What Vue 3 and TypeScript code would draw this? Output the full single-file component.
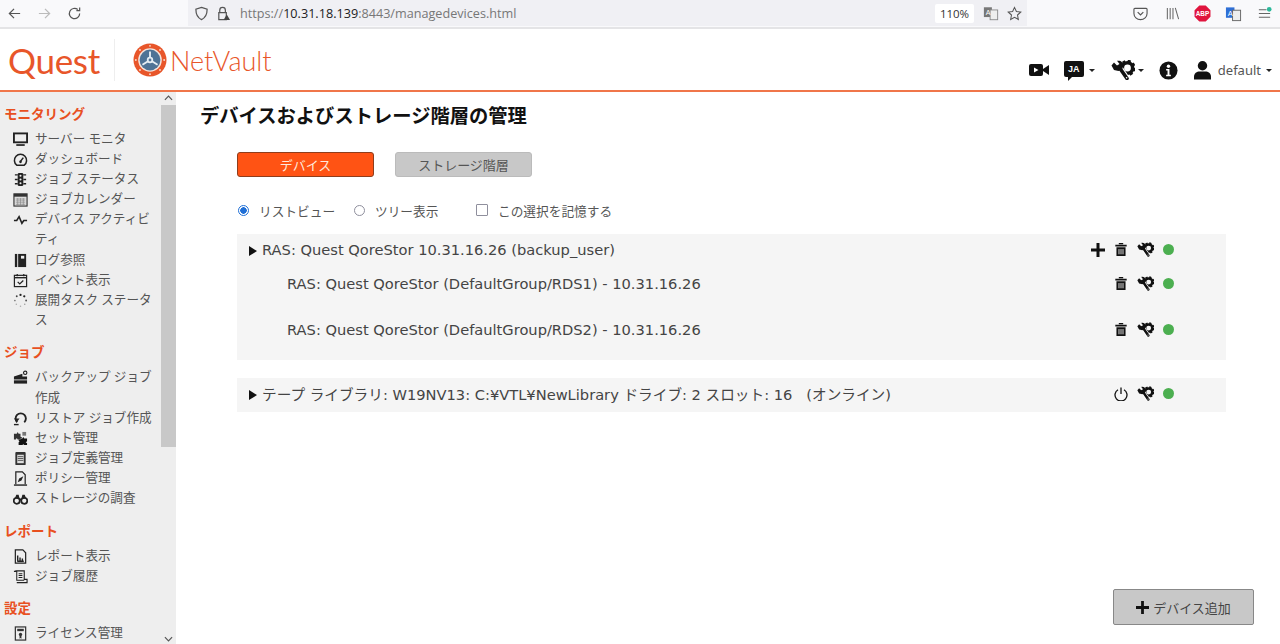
<script setup lang="ts">
interface NavItem { icon: string; label: string }
interface NavGroup { title: string; items: NavItem[] }

const groups: NavGroup[] = [
  { title: 'モニタリング', items: [
    { icon: 'monitor', label: 'サーバー モニタ' },
    { icon: 'gauge', label: 'ダッシュボード' },
    { icon: 'traffic', label: 'ジョブ ステータス' },
    { icon: 'calendar', label: 'ジョブカレンダー' },
    { icon: 'pulse', label: 'デバイス アクティビ\nティ' },
    { icon: 'book', label: 'ログ参照' },
    { icon: 'event', label: 'イベント表示' },
    { icon: 'spinner', label: '展開タスク ステータ\nス' },
  ] },
  { title: 'ジョブ', items: [
    { icon: 'backup', label: 'バックアップ ジョブ\n作成' },
    { icon: 'restore', label: 'リストア ジョブ作成' },
    { icon: 'sets', label: 'セット管理' },
    { icon: 'jobdef', label: 'ジョブ定義管理' },
    { icon: 'policy', label: 'ポリシー管理' },
    { icon: 'binoculars', label: 'ストレージの調査' },
  ] },
  { title: 'レポート', items: [
    { icon: 'report', label: 'レポート表示' },
    { icon: 'scroll', label: 'ジョブ履歴' },
  ] },
  { title: '設定', items: [
    { icon: 'license', label: 'ライセンス管理' },
  ] },
]
</script>

<template>
  <div class="page">
    <svg class="defs" width="0" height="0" aria-hidden="true">
      <defs>
        <symbol id="i-monitor" viewBox="0 0 16 16"><rect x="1" y="1.5" width="14" height="9.5" fill="none" stroke="#222" stroke-width="2"/><rect x="3.5" y="13" width="9" height="1.8" fill="#222"/></symbol>
        <symbol id="i-gauge" viewBox="0 0 16 16"><path d="M4 14A6.5 6.5 0 1 1 12 14Z" fill="none" stroke="#222" stroke-width="1.6"/><path d="M8 10l3-4" stroke="#222" stroke-width="1.6"/><circle cx="8" cy="10.5" r="1.4" fill="#222"/></symbol>
        <symbol id="i-traffic" viewBox="0 0 16 16"><rect x="5" y="1" width="6" height="14" rx="1.5" fill="#222"/><path d="M2 3h3M11 3h3M2 8h3M11 8h3M2 12.5h3M11 12.5h3" stroke="#222" stroke-width="1.4"/><circle cx="8" cy="4" r="1.1" fill="#eee"/><circle cx="8" cy="8" r="1.1" fill="#eee"/><circle cx="8" cy="12" r="1.1" fill="#eee"/></symbol>
        <symbol id="i-calendar" viewBox="0 0 16 16"><rect x="1" y="2" width="14" height="13" fill="#ddd" stroke="#333" stroke-width="1.2"/><rect x="1" y="2" width="14" height="3" fill="#333"/><path d="M3 7.5h10M3 9.5h10M3 11.5h10M3 13.5h10M5 6.5v8M8 6.5v8M11 6.5v8" stroke="#888" stroke-width=".7"/></symbol>
        <symbol id="i-pulse" viewBox="0 0 16 16"><path d="M1 9h3l2.5-4 3 7 2-3H15" fill="none" stroke="#222" stroke-width="1.7"/></symbol>
        <symbol id="i-book" viewBox="0 0 16 16"><rect x="2" y="1" width="2.5" height="14" fill="#222"/><rect x="5.5" y="1" width="8.5" height="14" fill="#222"/><rect x="8.5" y="3" width="3.5" height="3" fill="#eee"/></symbol>
        <symbol id="i-event" viewBox="0 0 16 16"><rect x="1.5" y="2.5" width="13" height="12" fill="none" stroke="#222" stroke-width="1.3"/><path d="M1.5 5h13" stroke="#222" stroke-width="1.5"/><path d="M4.5 1v2.5M11.5 1v2.5" stroke="#222" stroke-width="1.3"/><path d="M5 9.5l2.2 2.2L11 8" fill="none" stroke="#222" stroke-width="1.3"/></symbol>
        <symbol id="i-spinner" viewBox="0 0 16 16"><circle cx="8" cy="2" r="1.2" fill="#222"/><circle cx="12" cy="3.5" r="1.2" fill="#222"/><circle cx="14" cy="8" r="1" fill="#555"/><circle cx="12.5" cy="12" r=".8" fill="#999"/><circle cx="8" cy="14" r=".8" fill="#aaa"/><circle cx="3.5" cy="12" r=".8" fill="#aaa"/><circle cx="2" cy="8" r=".9" fill="#777"/><circle cx="4" cy="3.5" r="1" fill="#444"/></symbol>
        <symbol id="i-backup" viewBox="0 0 16 16"><path d="M1 7l9-3v3h5v3H1Z" fill="#222"/><rect x="1" y="11" width="14" height="3.5" fill="#222"/><circle cx="13" cy="3" r="1.8" fill="none" stroke="#222" stroke-width="1.2"/></symbol>
        <symbol id="i-restore" viewBox="0 0 16 16"><path d="M4.5 12A5.5 5.5 0 1 1 12 12" fill="none" stroke="#222" stroke-width="2"/><path d="M1 8h6l-3 4Z" fill="#222"/><path d="M1 14.5h5" stroke="#222" stroke-width="1.5"/></symbol>
        <symbol id="i-sets" viewBox="0 0 16 16"><path d="M1 3h3l1-2 1 2h2v3l2 1-2 1v1H5L4 7.5 3 9H1Z" fill="#333"/><path d="M8 8h2l1-1.5L12 8h3v3l-1.5 1 1.5 1v2h-3l-1-1-1 1H6v-3l1-1-1-1V9h2Z" fill="#111"/><path d="M10 1h4v4h-4Z" fill="#777"/></symbol>
        <symbol id="i-jobdef" viewBox="0 0 16 16"><rect x="2.5" y="1" width="11" height="14" rx="1" fill="#333"/><rect x="4.5" y="4" width="7" height="9" fill="#ddd"/><path d="M5 6h6M5 8h6M5 10h6" stroke="#444" stroke-width=".9"/></symbol>
        <symbol id="i-policy" viewBox="0 0 16 16"><path d="M3 14V1h7l3 3v10" fill="none" stroke="#222" stroke-width="1.3"/><path d="M1 15h14" stroke="#222" stroke-width="1.5"/><path d="M5 12l1.5-4L11 5.5 9 10Z" fill="#222"/></symbol>
        <symbol id="i-binoculars" viewBox="0 0 16 16"><circle cx="4" cy="10.5" r="3.2" fill="none" stroke="#222" stroke-width="1.8"/><circle cx="12" cy="10.5" r="3.2" fill="none" stroke="#222" stroke-width="1.8"/><path d="M2 8l1.5-4H6L7 8v2H9V8l1-4h2.5L14 8Z" fill="#222"/></symbol>
        <symbol id="i-report" viewBox="0 0 16 16"><path d="M2.5 1h8l3 3v11h-11Z" fill="none" stroke="#222" stroke-width="1.3"/><path d="M5 12.5V7M7.5 12.5V9M10 12.5V10M4.5 13h7" stroke="#222" stroke-width="1.5"/></symbol>
        <symbol id="i-scroll" viewBox="0 0 16 16"><path d="M1 2.5h3M4 14.5h11V11H12V2H2.5" fill="none" stroke="#222" stroke-width="1.2"/><path d="M4 2v10h8M6 5h4M6 7h4M6 9h4" fill="none" stroke="#222" stroke-width="1.1"/></symbol>
        <symbol id="i-license" viewBox="0 0 16 16"><rect x="2.5" y="1" width="11" height="14" fill="none" stroke="#333" stroke-width="1.3"/><rect x="4.5" y="3" width="7" height="2.5" fill="#333"/><circle cx="8" cy="9" r="1.8" fill="#333"/><path d="M7 10.5v3l1-.7 1 .7v-3" fill="#333"/></symbol>
        <symbol id="i-tool" viewBox="0 0 24 20">
          <circle cx="16.5" cy="8" r="5.2" fill="none" stroke="#111" stroke-width="3.6"/>
          <circle cx="16.5" cy="8" r="7" fill="none" stroke="#111" stroke-width="2.4" stroke-dasharray="3 2.5"/>
          <path d="M8 7l8 12" stroke="#fff" stroke-width="6"/>
          <path d="M8 7l8 11.5" stroke="#111" stroke-width="3.6" stroke-linecap="round"/>
          <path d="M.5 5.500L3 2.500l3 3L8.500 4 6 .8c3.500-.8 6.500 1.500 6.500 4.700l-1.500 4-3.500 1.500-4.500-1Z" fill="#111"/>
          <circle cx="15.6" cy="17.8" r=".8" fill="#fff"/>
        </symbol>
        <symbol id="i-trash" viewBox="0 0 16 16"><path d="M1.500 2.500h13v2h-13ZM5.500 .5h5v1.500h-5ZM2.800 5.500h10.400V15.500H2.800Z" fill="#111"/><path d="M5.700 7.500v6M8 7.500v6M10.300 7.500v6" stroke="#f5f5f5" stroke-width="1"/></symbol>
      </defs>
    </svg>

    <div class="browser">
      <div class="nav-btns">
        <svg class="b-ico" viewBox="0 0 16 16"><path d="M14 8H2.500M7.500 3l-5 5 5 5" fill="none" stroke="#555" stroke-width="1.3"/></svg>
        <svg class="b-ico" viewBox="0 0 16 16"><path d="M2 8h11.500M8.500 3l5 5-5 5" fill="none" stroke="#bbb" stroke-width="1.3"/></svg>
        <svg class="b-ico" viewBox="0 0 16 16"><path d="M13.500 8A5.500 5.500 0 1 1 11.500 3.800M13.500 1.500V5h-3.500" fill="none" stroke="#555" stroke-width="1.3"/></svg>
      </div>
      <div class="address">
        <svg class="shield" viewBox="0 0 16 16"><path d="M8 1.500l6 2c0 5-1.500 9-6 11-4.500-2-6-6-6-11Z" fill="none" stroke="#555" stroke-width="1.3"/></svg>
        <svg class="lock" viewBox="0 0 16 16"><path d="M4 7V4.500a3 3 0 0 1 6 0V7M3 7h8v7.500H3Z" fill="none" stroke="#555" stroke-width="1.3"/><path d="M11.500 9l3.500 6H8Z" fill="#444"/></svg>
        <div class="url">https://<b>10.31.18.139</b>:8443/managedevices.html</div>
        <div class="zoom-chip">110%</div>
        <svg class="trans" viewBox="0 0 18 16"><rect x="1" y="1" width="9" height="11" fill="#777"/><rect x="8" y="4" width="8.5" height="11" fill="#eee" stroke="#888"/><text x="3" y="10" font-size="8" fill="#fff" font-family="Liberation Sans">A</text></svg>
        <svg class="star" viewBox="0 0 16 16"><path d="M8 1.500l2 4.300 4.700.6-3.500 3.200.9 4.700L8 12l-4.100 2.300.9-4.700L1.300 6.400 6 5.800Z" fill="none" stroke="#555" stroke-width="1.1"/></svg>
      </div>
      <div class="ext">
        <svg class="b-ico" viewBox="0 0 16 16"><path d="M2 2.500h12a1 1 0 0 1 1 1V8A7 6.500 0 0 1 1 8V3.500a1 1 0 0 1 1-1Z" fill="none" stroke="#555" stroke-width="1.2"/><path d="M5 6.500l3 3 3-3" fill="none" stroke="#555" stroke-width="1.3"/></svg>
        <svg class="b-ico lib" viewBox="0 0 16 16"><path d="M2.500 2v12M5.500 2v12M8.500 2v12M11 2l3.500 12" fill="none" stroke="#666" stroke-width="1.1"/></svg>
        <svg class="b-ico abp" viewBox="0 0 16 16"><path d="M5 .5h6L15.500 5v6L11 15.500H5L.5 11V5Z" fill="#e0153e"/><text x="8" y="10.3" text-anchor="middle" font-size="6" font-weight="700" fill="#fff" font-family="Liberation Sans">ABP</text></svg>
        <svg class="b-ico tr2" viewBox="0 0 18 16"><rect x="1" y="1" width="9" height="11" fill="#2e6fd6"/><rect x="8" y="4" width="8.5" height="11" fill="#eee" stroke="#666"/><text x="3" y="10" font-size="8" fill="#fff" font-family="Liberation Sans">A</text></svg>
        <svg class="b-ico" viewBox="0 0 16 16"><path d="M2 4h8M2 8h12M2 12h12" stroke="#666" stroke-width="1.2"/><circle cx="13" cy="3.5" r="2.5" fill="#2bb89a"/></svg>
      </div>
    </div>

    <header class="topbar">
      <div class="brand">
        <span class="quest">Quest</span>
        <span class="sep"></span>
        <svg class="nv-logo" viewBox="0 0 36 36">
          <circle cx="18" cy="18" r="17.5" fill="#e8562a"/>
          <circle cx="18" cy="18" r="12.5" fill="#f6e3da"/>
          <circle cx="18" cy="18" r="11" fill="#4f7396"/>
          <path d="M18 18V9M18 18l-8 5M18 18l8 5" stroke="#e6edf3" stroke-width="2"/>
          <circle cx="18" cy="18" r="3.4" fill="#e6edf3"/>
          <circle cx="18" cy="18" r="1.5" fill="#4f7396"/>
          <g fill="#f8d8c8">
            <circle cx="18" cy="3" r="1"/><circle cx="18" cy="33" r="1"/><circle cx="3" cy="18" r="1"/><circle cx="33" cy="18" r="1"/>
            <circle cx="7.4" cy="7.4" r="1"/><circle cx="28.6" cy="7.4" r="1"/><circle cx="7.4" cy="28.6" r="1"/><circle cx="28.6" cy="28.6" r="1"/>
          </g>
        </svg>
        <span class="netvault">NetVault</span>
      </div>
      <div class="top-actions">
        <svg class="t-video" viewBox="0 0 20 14"><rect x="0" y="1" width="14" height="12" rx="2" fill="#111"/><path d="M14 6l6-4v10l-6-4Z" fill="#111"/><path d="M5 4.500l4.500 2.500L5 9.500Z" fill="#fff"/></svg>
        <div class="t-group lang">
          <div class="bubble">JA</div>
          <span class="caret"></span>
        </div>
        <div class="t-group tools">
          <svg class="t-tool"><use href="#i-tool"/></svg>
          <span class="caret"></span>
        </div>
        <svg class="t-info" viewBox="0 0 20 20"><circle cx="10" cy="10" r="9.5" fill="#111"/><circle cx="10" cy="5.5" r="1.8" fill="#fff"/><path d="M7.500 8.500h3.500v6h1.500v1.500h-5v-1.500H9V10H7.500Z" fill="#fff"/></svg>
        <div class="t-group user">
          <svg class="t-user" viewBox="0 0 18 20"><circle cx="9" cy="5.5" r="5" fill="#111"/><path d="M0 20v-3c0-3.500 3-5.500 6-5.500h6c3 0 6 2 6 5.500v3Z" fill="#111"/></svg>
          <span class="uname">default</span>
          <span class="caret"></span>
        </div>
      </div>
    </header>

    <div class="body">
      <aside class="sidebar">
        <nav class="sidenav">
          <section v-for="g in groups" :key="g.title" class="group">
            <h3 class="group-title">{{ g.title }}</h3>
            <div v-for="it in g.items" :key="it.label" class="nav-item">
              <svg class="nav-ico"><use :href="'#i-' + it.icon"/></svg>
              <span class="nav-label">{{ it.label }}</span>
            </div>
          </section>
        </nav>
        <div class="scrollbar">
          <svg class="sb-arrow" viewBox="0 0 10 6"><path d="M1 5l4-4 4 4" fill="none" stroke="#555" stroke-width="1.3"/></svg>
          <div class="sb-thumb"></div>
          <svg class="sb-arrow bottom" viewBox="0 0 10 6"><path d="M1 1l4 4 4-4" fill="none" stroke="#555" stroke-width="1.3"/></svg>
        </div>
      </aside>

      <main class="main">
        <h1 class="title">デバイスおよびストレージ階層の管理</h1>
        <div class="content">
          <div class="tabs">
            <button class="tab active">デバイス</button>
            <button class="tab">ストレージ階層</button>
          </div>
          <div class="options">
            <label class="opt first"><span class="radio on"></span>リストビュー</label>
            <label class="opt second"><span class="radio"></span>ツリー表示</label>
            <label class="opt third"><span class="check"></span>この選択を記憶する</label>
          </div>

          <div class="panel p1">
            <div class="row head">
              <span class="tri"></span>
              <span class="row-text">RAS: Quest QoreStor 10.31.16.26 (backup_user)</span>
              <div class="acts">
                <svg class="a-plus" viewBox="0 0 14 14"><path d="M7 0v14M0 7h14" stroke="#111" stroke-width="3"/></svg>
                <svg class="a-trash"><use href="#i-trash"/></svg>
                <svg class="a-tool"><use href="#i-tool"/></svg>
                <span class="dot"></span>
              </div>
            </div>
            <div class="row child">
              <span class="row-text">RAS: Quest QoreStor (DefaultGroup/RDS1) - 10.31.16.26</span>
              <div class="acts">
                <svg class="a-trash"><use href="#i-trash"/></svg>
                <svg class="a-tool"><use href="#i-tool"/></svg>
                <span class="dot"></span>
              </div>
            </div>
            <div class="row child">
              <span class="row-text">RAS: Quest QoreStor (DefaultGroup/RDS2) - 10.31.16.26</span>
              <div class="acts">
                <svg class="a-trash"><use href="#i-trash"/></svg>
                <svg class="a-tool"><use href="#i-tool"/></svg>
                <span class="dot"></span>
              </div>
            </div>
          </div>

          <div class="panel p2">
            <div class="row head">
              <span class="tri"></span>
              <span class="row-text">テープ ライブラリ: W19NV13: C:¥VTL¥NewLibrary ドライブ: 2 スロット: 16 &nbsp;&nbsp;(オンライン)</span>
              <div class="acts">
                <svg class="a-power" viewBox="0 0 14 14"><path d="M4 2.800a6 6 0 1 0 6 0M7 .5V7" fill="none" stroke="#111" stroke-width="1.3"/></svg>
                <svg class="a-tool"><use href="#i-tool"/></svg>
                <span class="dot"></span>
              </div>
            </div>
          </div>
        </div>
        <div class="footer">
          <button class="add-btn">
            <svg class="add-plus" viewBox="0 0 14 14"><path d="M7 0v14M0 7h14" stroke="#111" stroke-width="3"/></svg>
            デバイス追加
          </button>
        </div>
      </main>
    </div>
  </div>
</template>

<style scoped>
.page {
  width: 1280px;
  height: 644px;
  overflow: hidden;
  display: flex;
  flex-direction: column;
  background: #fff;
  font-family: "Noto Sans", "Noto Sans CJK JP", sans-serif;
  color: #444;
}
.defs { position: absolute; }

.browser {
  height: 27px;
  flex: none;
  display: flex;
  background: #f9f9fb;
  border-bottom: 2px solid #e4e4e6;
}
.nav-btns {
  width: 188px;
  display: flex;
  align-items: center;
  gap: 15px;
  padding-left: 7px;
  box-sizing: border-box;
  flex: none;
}
.b-ico { width: 15px; height: 15px; flex: none; }
.address {
  width: 839px;
  flex: none;
  background: #f0f0f4;
  display: flex;
  align-items: center;
  height: 26px;
}
.shield { width: 15px; height: 15px; margin-left: 6px; }
.lock { width: 15px; height: 15px; margin-left: 7px; }
.url {
  margin-left: 9px;
  font-size: 12.65px;
  color: #777;
  width: 695px;
  font-family: "Open Sans", sans-serif;
}
.url b { font-weight: 400; color: #222; }
.zoom-chip {
  width: 39px;
  height: 19px;
  background: #fff;
  border-radius: 2px;
  font-size: 11.5px;
  line-height: 19px;
  text-align: center;
  color: #333;
  font-family: "Open Sans", sans-serif;
}
.trans { width: 16px; height: 15px; margin-left: 9px; }
.star { width: 15px; height: 15px; margin-left: 8px; }
.ext {
  display: flex;
  align-items: center;
  gap: 15px;
  padding-left: 106px;
}
.ext .lib { margin-left: 2px; }
.ext .abp { width: 17px; height: 17px; margin-left: -1px; }
.ext .tr2 { width: 17px; height: 16px; margin-left: -1px; }

.topbar {
  flex: none;
  height: 61px;
  display: flex;
  justify-content: space-between;
  border-bottom: 2px solid #f0764a;
  background: #fff;
}
.brand { display: flex; align-items: center; height: 62px; padding-left: 8px; }
.quest {
  font-family: Lato, sans-serif;
  font-size: 35px;
  font-weight: 400;
  color: #e8562a;
  letter-spacing: -0.3px;
  width: 106px;
}
.sep { width: 1px; height: 42px; background: #eee; margin-right: 18px; }
.nv-logo { width: 34px; height: 34px; flex: none; }
.netvault {
  font-family: Lato, sans-serif;
  font-size: 27px;
  font-weight: 300;
  color: #e8562a;
  margin-left: 3px;
}
.top-actions {
  display: flex;
  align-items: center;
  padding: 21px 8px 0 0;
}
.t-video { width: 20px; height: 14px; margin-right: 15px; }
.t-group { display: flex; align-items: center; }
.bubble {
  width: 20px;
  height: 16px;
  margin-bottom: 3px;
  background: #111;
  border-radius: 2px;
  color: #fff;
  font: 700 9px/16px "Liberation Sans", sans-serif;
  text-align: center;
  position: relative;
}
.bubble::after {
  content: "";
  position: absolute;
  left: 4px;
  bottom: -4px;
  border-left: 4px solid #111;
  border-bottom: 4px solid transparent;
}
.caret {
  width: 0;
  height: 0;
  border-left: 3.5px solid transparent;
  border-right: 3.5px solid transparent;
  border-top: 3.5px solid #222;
  margin-left: 5px;
}
.lang { margin-right: 16px; }
.t-tool { width: 24px; height: 20px; }
.tools { margin-right: 15px; }
.tools .caret { margin-left: 3px; }
.t-info { width: 19px; height: 19px; margin-right: 16px; }
.t-user { width: 17px; height: 20px; }
.uname { font-size: 13px; color: #555; margin-left: 7px; }

.body { flex: 1; min-height: 0; display: flex; }
.sidebar {
  width: 176px;
  flex: none;
  display: flex;
  background: #eee;
  overflow: hidden;
}
.sidenav {
  width: 161px;
  flex: none;
  padding: 12px 0 0 4px;
  box-sizing: border-box;
}
.group { margin-bottom: 12.5px; }
.group-title {
  margin: 0 0 5px;
  font-size: 13.5px;
  line-height: 20px;
  font-weight: 700;
  color: #e8501f;
}
.nav-item { display: flex; padding-left: 9px; }
.nav-ico { width: 15px; height: 15px; flex: none; margin-top: 3px; }
.nav-label {
  margin-left: 7px;
  white-space: pre-line;
  font-size: 12.6px;
  line-height: 20.1px;
  color: #555;
}
.scrollbar {
  width: 15px;
  flex: none;
  display: flex;
  flex-direction: column;
  align-items: center;
}
.sb-arrow { width: 9px; height: 6px; margin-top: 3px; flex: none; }
.sb-thumb {
  width: 15px;
  height: 342px;
  margin-top: 4px;
  background: #c8c8c8;
}
.sb-arrow.bottom { margin-top: auto; margin-bottom: 2px; }

.main {
  flex: 1;
  min-width: 0;
  display: flex;
  flex-direction: column;
  padding: 9px 26px 19px 24px;
  box-sizing: border-box;
}
.title {
  margin: 0;
  font-size: 19.3px;
  line-height: 30px;
  font-weight: 700;
  color: #111;
}
.content { padding-left: 37px; }
.tabs { display: flex; gap: 21px; margin-top: 21px; }
.tab {
  width: 137px;
  height: 25px;
  padding: 0;
  border-radius: 3px;
  font-family: inherit;
  font-size: 13px;
  border: 1px solid #bbb;
  background: #c8c8c8;
  color: #555;
}
.tab.active { background: #ff5314; border-color: #8f3d1c; color: #ffe9dc; }
.options {
  display: flex;
  align-items: center;
  height: 20px;
  margin-top: 23px;
  font-size: 12.7px;
  color: #555;
}
.opt { display: flex; align-items: center; }
.first { width: 116px; }
.second { width: 123px; }
.radio {
  width: 9px;
  height: 9px;
  border: 1px solid #8f8f9d;
  border-radius: 50%;
  margin-right: 10px;
  margin-left: 1px;
  background: #fff;
  box-sizing: content-box;
}
.radio.on {
  border: 1px solid #1f6fd6;
  background: radial-gradient(circle, #1f6fd6 0 3px, #fff 3.5px);
}
.check {
  width: 10px;
  height: 10px;
  border: 1px solid #8f8f9d;
  border-radius: 1px;
  margin-right: 10px;
}
.panel { width: 989px; background: #f5f5f5; }
.p1 { margin-top: 14px; height: 126px; }
.p2 { margin-top: 18px; height: 34px; }
.row {
  display: flex;
  align-items: center;
  font-family: "DejaVu Sans", "Noto Sans CJK JP", sans-serif;
  font-size: 14.65px;
  color: #444;
  box-sizing: border-box;
}
.head { height: 33px; padding: 0 0 2px 12px; }
.child { height: 35px; padding: 0 0 2px 50px; }
.child + .child { margin-top: 11px; }
.tri {
  width: 0;
  height: 0;
  border-left: 8px solid #111;
  border-top: 5px solid transparent;
  border-bottom: 5px solid transparent;
  margin-right: 5px;
  margin-top: 2px;
}
.acts {
  margin-left: auto;
  display: flex;
  align-items: center;
  justify-content: flex-end;
  padding-right: 52px;
}
.a-plus { width: 14px; height: 14px; margin-right: 9px; }
.a-trash { width: 14px; height: 15px; margin-right: 9px; }
.a-power { width: 14px; height: 14px; margin-right: 9px; }
.a-tool { width: 17px; height: 15px; margin-right: 9px; }
.dot { width: 11px; height: 11px; border-radius: 50%; background: #4caf50; }

.footer { margin-top: auto; display: flex; justify-content: flex-end; }
.add-btn {
  width: 141px;
  height: 36px;
  padding: 0;
  display: flex;
  align-items: center;
  justify-content: center;
  gap: 4px;
  background: #c8c8c8;
  border: 1px solid #888;
  border-radius: 2px;
  font-family: inherit;
  font-size: 13px;
  color: #444;
}
.add-plus { width: 13px; height: 13px; }
</style>
